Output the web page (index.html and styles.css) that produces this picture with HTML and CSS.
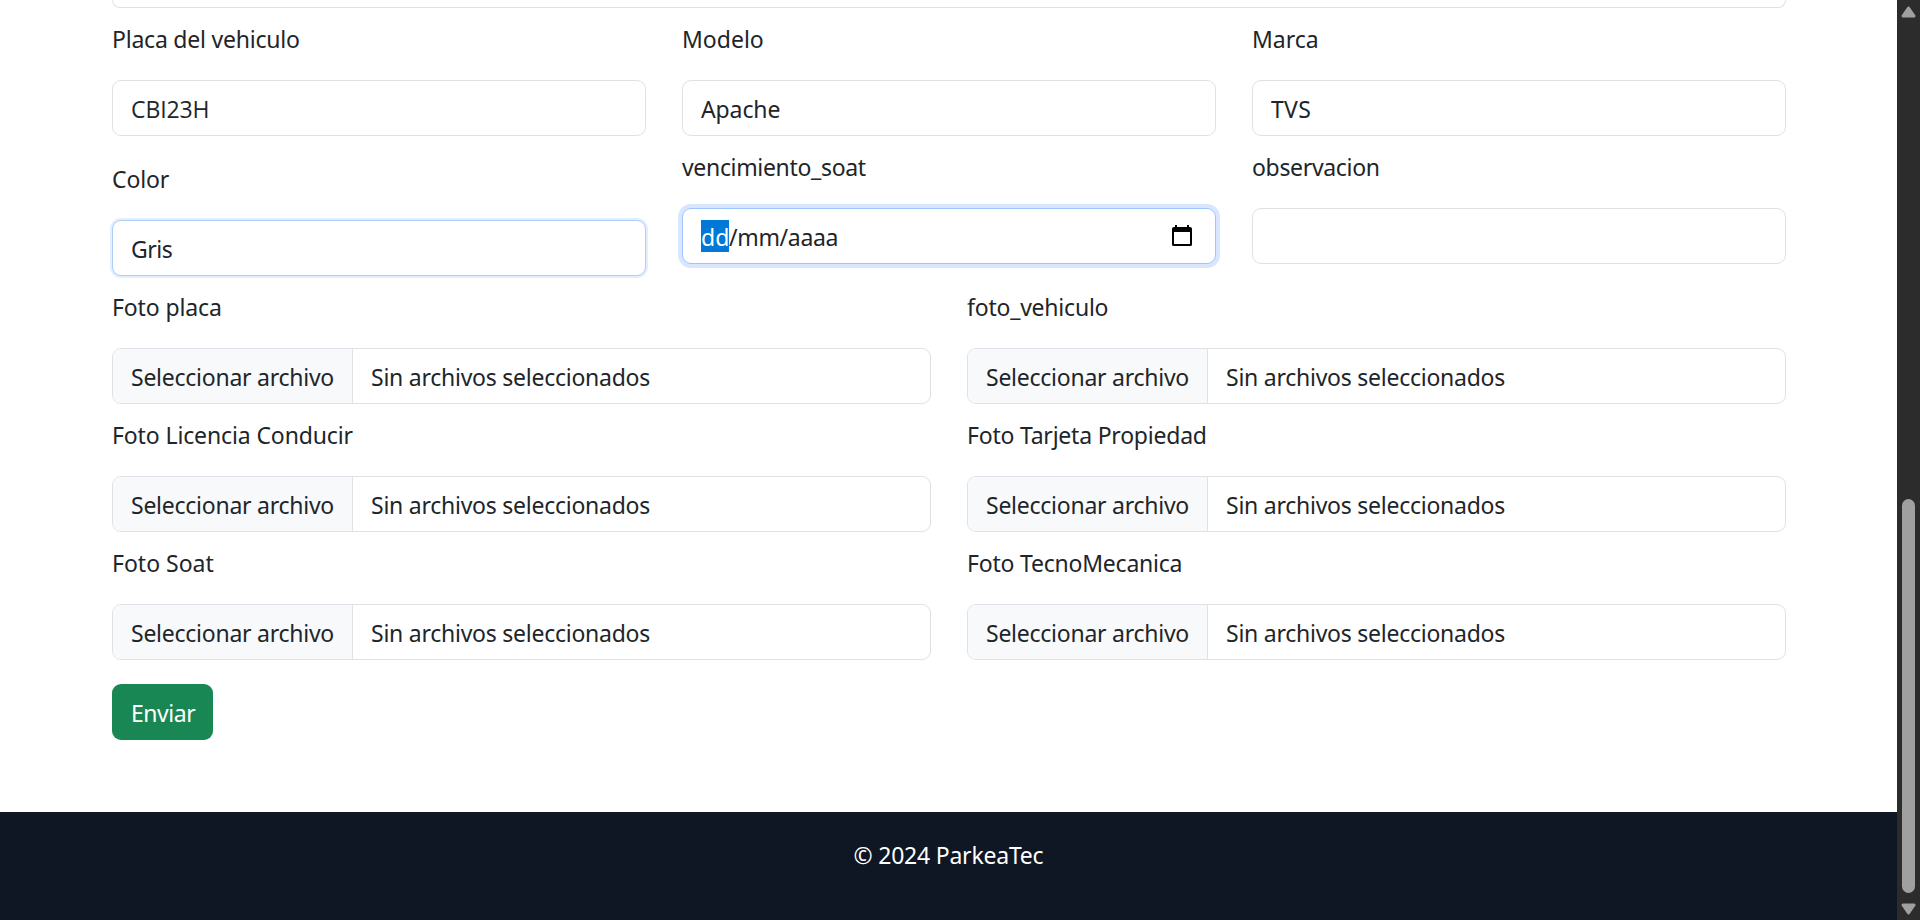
FILE: index.html
```
<!DOCTYPE html>
<html lang="es">
<head>
<meta charset="utf-8">
<title>ParkeaTec</title>
<link rel="stylesheet" href="styles.css">
</head>
<body>
<div class="page">
  <main class="content">
    <div class="control control-cut"></div>
    <div class="row thirds">
      <div class="field"><div class="label tight-2">Placa del vehiculo</div><div class="control"><span class="value plate">CBI23H</span></div></div>
      <div class="field"><div class="label">Modelo</div><div class="control"><span class="value tight-1">Apache</span></div></div>
      <div class="field"><div class="label">Marca</div><div class="control"><span class="value loose">TVS</span></div></div>
    </div>
    <div class="row row-tall thirds">
      <div class="field field-low"><div class="label tight-1">Color</div><div class="control fading"><span class="value tight-4">Gris</span></div></div>
      <div class="field"><div class="label tight-3">vencimiento_soat</div>
        <div class="control focused">
          <span class="date"><span class="selected">dd</span><span class="tight-3">/mm/aaaa</span></span>
          <svg class="calendar" viewBox="0 0 20 22"><path fill="#000" fill-rule="evenodd" d="M3 0h2v2h10V0h2v2h1a2 2 0 0 1 2 2v15.500a1.500 1.500 0 0 1-1.500 1.500h-17A1.500 1.500 0 0 1 0 19.500V4a2 2 0 0 1 2-2h1zM2 7v12h16V7z"/></svg>
        </div>
      </div>
      <div class="field"><div class="label tight-3">observacion</div><div class="control"></div></div>
    </div>
    <div class="row halves">
      <div class="field"><div class="label tight-1">Foto placa</div><div class="control file"><span class="pick"><span class="value">Seleccionar archivo</span></span><span class="value">Sin archivos seleccionados</span></div></div>
      <div class="field"><div class="label tight-2">foto_vehiculo</div><div class="control file"><span class="pick"><span class="value">Seleccionar archivo</span></span><span class="value">Sin archivos seleccionados</span></div></div>
    </div>
    <div class="row halves">
      <div class="field"><div class="label tight-1">Foto Licencia Conducir</div><div class="control file"><span class="pick"><span class="value">Seleccionar archivo</span></span><span class="value">Sin archivos seleccionados</span></div></div>
      <div class="field"><div class="label tight-2">Foto Tarjeta Propiedad</div><div class="control file"><span class="pick"><span class="value">Seleccionar archivo</span></span><span class="value">Sin archivos seleccionados</span></div></div>
    </div>
    <div class="row halves">
      <div class="field"><div class="label">Foto Soat</div><div class="control file"><span class="pick"><span class="value">Seleccionar archivo</span></span><span class="value">Sin archivos seleccionados</span></div></div>
      <div class="field"><div class="label tight-2">Foto TecnoMecanica</div><div class="control file"><span class="pick"><span class="value">Seleccionar archivo</span></span><span class="value">Sin archivos seleccionados</span></div></div>
    </div>
    <button class="submit" type="button"><span class="value tight-4">Enviar</span></button>
  </main>
  <footer class="footer"><span class="tight-2">© 2024 ParkeaTec</span></footer>
</div>
<div class="scrollbar">
  <svg class="arrow" viewBox="0 0 15 12"><path d="M7.500 2L13 10H2z" fill="#a0a0a0" stroke="#a0a0a0" stroke-width="3" stroke-linejoin="round"/></svg>
  <div class="thumb"></div>
  <svg class="arrow" viewBox="0 0 15 12"><path d="M7.500 10L13 2H2z" fill="#a0a0a0" stroke="#a0a0a0" stroke-width="3" stroke-linejoin="round"/></svg>
</div>
</body>
</html>
```
FILE: styles.css
```
* { box-sizing: border-box; }
body {
  margin: 0;
  height: 920px;
  display: flex;
  overflow: hidden;
  background: #fff;
  color: #212529;
  font: 23px/36px "Noto Sans", "Open Sans", sans-serif;
  white-space: nowrap;
}
.page { width: 1897px; display: flex; flex-direction: column; }
.content { height: 812px; padding: 0 111px 0 112px; }
.row { display: grid; column-gap: 36px; height: 128px; }
.row-tall { height: 140px; }
.thirds { grid-template-columns: repeat(3, 534px); }
.halves { grid-template-columns: repeat(2, 819px); }
.field { padding-top: 13px; }
.field-low { padding-top: 27px; }
.label { height: 59px; }
.field-low .label { height: 57px; line-height: 32px; }
.control {
  display: flex;
  align-items: center;
  height: 56px;
  padding: 0 17px 0 18px;
  border: 1px solid #dee2e6;
  border-radius: 9px;
  background: #fff;
}
.control-cut { height: 8px; border-top: 0; border-radius: 0 0 9px 9px; }
.value { padding-top: 2px; }
.file .value { letter-spacing: -0.25px; }
.plate { font-family: "Open Sans", sans-serif; letter-spacing: -0.1px; }
.loose { letter-spacing: 0.3px; }
.tight-1 { letter-spacing: -0.12px; }
.tight-2 { letter-spacing: -0.22px; }
.tight-3 { letter-spacing: -0.33px; }
.tight-4 { letter-spacing: -0.45px; }
.fading { border-color: #b0cdf8; box-shadow: 0 0 0 2px #e3eefe; }
.focused {
  justify-content: space-between;
  padding-right: 23px;
  border-color: #9ec5fe;
  box-shadow: 0 0 0 4px #d9e7fe;
}
.date { display: flex; height: 32px; line-height: 34px; }
.selected { width: 28px; height: 32px; background: #0078d7; color: #fff; }
.calendar { width: 20px; height: 22px; margin-bottom: 1px; }
.file { padding-left: 0; overflow: hidden; }
.pick {
  display: flex;
  align-items: center;
  width: 240px;
  height: 54px;
  padding-left: 18px;
  margin-right: 18px;
  border-right: 1px solid #dee2e6;
  background: #f8f9fa;
}
.submit {
  display: flex;
  align-items: center;
  width: 101px;
  height: 56px;
  margin-top: 24px;
  padding: 0 19px;
  border: 0;
  border-radius: 9px;
  background: #198754;
  color: #fff;
  font: inherit;
}
.footer {
  height: 108px;
  padding-top: 25px;
  background: #0f1624;
  color: #fff;
  text-align: center;
}
.scrollbar {
  width: 23px;
  padding: 6px 4px 5px;
  display: flex;
  flex-direction: column;
  background: #2c2c2c;
}
.arrow { width: 15px; height: 12px; flex: none; }
.thumb {
  width: 13px;
  height: 394px;
  margin: 481px 0 10px 1px;
  flex: none;
  border-radius: 7px;
  background: #a0a0a0;
}
```
